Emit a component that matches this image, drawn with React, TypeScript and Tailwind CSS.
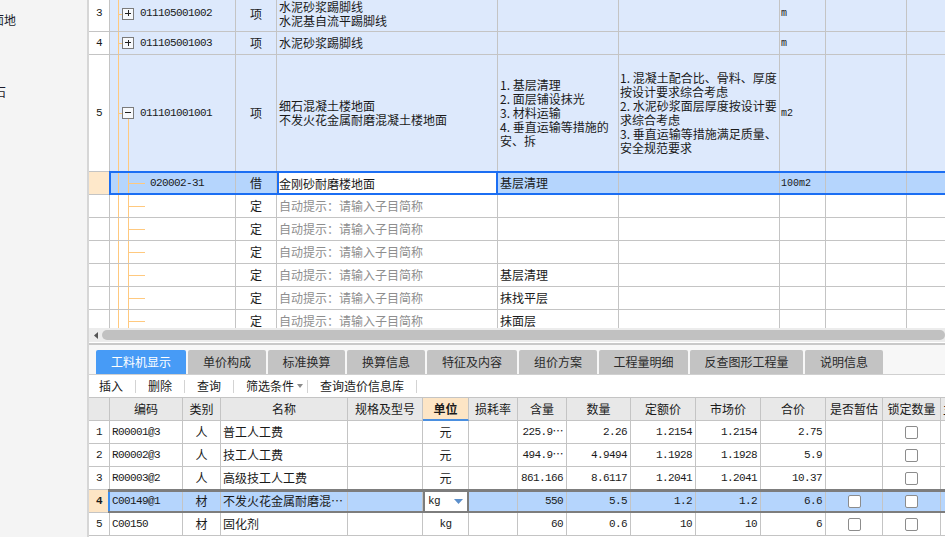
import React from "react";

const CJK = "font-['Noto_Sans_CJK_SC',sans-serif]";
const MONO = "font-['Liberation_Mono','Noto_Sans_CJK_SC',monospace] text-[11px] tracking-[-0.6px]";
const MONO10 = "font-['Liberation_Mono','Noto_Sans_CJK_SC',monospace] text-[10px]";

const TW = ["w-[21px]", "w-[126px]", "w-[41px]", "w-[221px]", "w-[121px]", "w-[161px]", "w-[46px]", "w-[81px]", "w-[200px]"];
const BW = ["w-[21px]", "w-[73px]", "w-[38px]", "w-[127px]", "w-[75px]", "w-[46px]", "w-[49px]", "w-[49px]", "w-[64px]", "w-[65px]", "w-[65px]", "w-[65px]", "w-[57px]", "w-[58px]", "w-[80px]"];

function Cell({ w, className = "", children }: { w: string; className?: string; children?: React.ReactNode }) {
  return (
    <div className={`${w} shrink-0 h-full border-r border-b border-[#c4c4c4] overflow-hidden flex items-center whitespace-nowrap ${className}`}>
      {children}
    </div>
  );
}

function Tree({ kind }: { kind: "plus" | "minus" | "child" }) {
  const line = "bg-[#ffc97f]";
  return (
    <>
      <div className={`absolute left-[8px] top-0 bottom-0 w-px ${line}`} />
      {kind === "child" && (
        <>
          <div className={`absolute left-[18px] top-0 bottom-0 w-px ${line}`} />
          <div className={`absolute left-[18px] top-1/2 w-[17px] h-px ${line}`} />
        </>
      )}
      {kind !== "child" && (
        <>
          <div className={`absolute left-[8px] top-1/2 w-[4px] h-px ${line}`} />
          {kind === "minus" && <div className={`absolute left-[18px] top-1/2 mt-[6px] bottom-0 w-px ${line}`} />}
          <div className="absolute left-[12px] top-1/2 -translate-y-1/2 w-[12px] h-[12px] border border-[#7b7b7b] bg-[#f7f9fc]">
            <div className="absolute left-[2px] top-[4px] w-[6px] h-px bg-[#222]" />
            {kind === "plus" && <div className="absolute left-[4.5px] top-[1.5px] w-px h-[6px] bg-[#222]" />}
          </div>
        </>
      )}
    </>
  );
}

function Check() {
  return <div className="w-[13px] h-[13px] rounded-[2px] border border-[#8c8c8c] bg-white" />;
}

function TopTable() {
  const blue = "bg-[#dde9fc]";
  const sel = "bg-[#b5d5fd]";
  const childRows: [string][] = [[""], [""], [""], ["基层清理"], ["抹找平层"], ["抹面层"]];
  return (
    <div className="h-[328px] shrink-0 overflow-hidden bg-white text-[12px]">
      <div className="-mt-[4px]">
        {/* row 3 */}
        <div className="flex h-[36px]">
          <Cell w={TW[0]} className={`justify-center ${MONO}`}>3</Cell>
          <Cell w={TW[1]} className={`relative ${blue}`}>
            <Tree kind="plus" />
            <span className={`ml-[30px] ${MONO}`}>011105001002</span>
          </Cell>
          <Cell w={TW[2]} className={`justify-center ${blue}`}>项</Cell>
          <Cell w={TW[3]} className={`pl-[2px] ${blue}`}>
            <div className="leading-[14px]">水泥砂浆踢脚线<br />水泥基自流平踢脚线</div>
          </Cell>
          <Cell w={TW[4]} className={blue} />
          <Cell w={TW[5]} className={blue} />
          <Cell w={TW[6]} className={`pl-[1px] ${blue} ${MONO10}`}>m</Cell>
          <Cell w={TW[7]} className={blue} />
          <Cell w={TW[8]} className={blue} />
        </div>
        {/* row 4 */}
        <div className="flex h-[23px]">
          <Cell w={TW[0]} className={`justify-center ${MONO}`}>4</Cell>
          <Cell w={TW[1]} className={`relative ${blue}`}>
            <Tree kind="plus" />
            <span className={`ml-[30px] ${MONO}`}>011105001003</span>
          </Cell>
          <Cell w={TW[2]} className={`justify-center ${blue}`}>项</Cell>
          <Cell w={TW[3]} className={`pl-[2px] ${blue}`}>水泥砂浆踢脚线</Cell>
          <Cell w={TW[4]} className={blue} />
          <Cell w={TW[5]} className={blue} />
          <Cell w={TW[6]} className={`pl-[1px] ${blue} ${MONO10}`}>m</Cell>
          <Cell w={TW[7]} className={blue} />
          <Cell w={TW[8]} className={blue} />
        </div>
        {/* row 5 */}
        <div className="flex h-[117px]">
          <Cell w={TW[0]} className={`justify-center ${MONO}`}>5</Cell>
          <Cell w={TW[1]} className={`relative ${blue}`}>
            <Tree kind="minus" />
            <span className={`ml-[30px] ${MONO}`}>011101001001</span>
          </Cell>
          <Cell w={TW[2]} className={`justify-center ${blue}`}>项</Cell>
          <Cell w={TW[3]} className={`pl-[2px] ${blue}`}>
            <div className="leading-[14px]">细石混凝土楼地面<br />不发火花金属耐磨混凝土楼地面</div>
          </Cell>
          <Cell w={TW[4]} className={`pl-[2px] ${blue}`}>
            <div className="leading-[14px]">1.&nbsp;基层清理<br />2.&nbsp;面层铺设抹光<br />3.&nbsp;材料运输<br />4.&nbsp;垂直运输等措施的<br />安、拆</div>
          </Cell>
          <Cell w={TW[5]} className={`pl-[1px] ${blue}`}>
            <div className="leading-[14px]">1.&nbsp;混凝土配合比、骨料、厚度<br />按设计要求综合考虑<br />2.&nbsp;水泥砂浆面层厚度按设计要<br />求综合考虑<br />3.&nbsp;垂直运输等措施满足质量、<br />安全规范要求</div>
          </Cell>
          <Cell w={TW[6]} className={`pl-[1px] ${blue} ${MONO10}`}>m2</Cell>
          <Cell w={TW[7]} className={blue} />
          <Cell w={TW[8]} className={blue} />
        </div>
        {/* selected child row */}
        <div className="flex h-[23px] relative">
          <Cell w={TW[0]} className="bg-[#fee8ca]" />
          <Cell w={TW[1]} className={`relative ${sel}`}>
            <Tree kind="child" />
            <span className={`ml-[40px] ${MONO}`}>020002-31</span>
          </Cell>
          <Cell w={TW[2]} className={`justify-center ${sel}`}>借</Cell>
          <div className="w-[221px] shrink-0 h-full border-x-2 border-[#1b6ef3] bg-white flex items-center whitespace-nowrap">金刚砂耐磨楼地面</div>
          <Cell w={TW[4]} className={`pl-[2px] ${sel}`}>基层清理</Cell>
          <Cell w={TW[5]} className={sel} />
          <Cell w={TW[6]} className={`pl-[1px] ${sel} ${MONO10}`}>100m2</Cell>
          <Cell w={TW[7]} className={sel} />
          <Cell w={TW[8]} className={sel} />
          <div className="absolute left-[20px] right-0 top-[-1px] h-[24px] border-2 border-r-0 border-[#1b6ef3] pointer-events-none" />
        </div>
        {childRows.map(([feat], i) => (
          <div key={i} className="flex h-[23px]">
            <Cell w={TW[0]} />
            <Cell w={TW[1]} className="relative">
              <Tree kind="child" />
            </Cell>
            <Cell w={TW[2]} className="justify-center">定</Cell>
            <Cell w={TW[3]} className="pl-[2px] text-[#8e8e8e]">自动提示：请输入子目简称</Cell>
            <Cell w={TW[4]} className="pl-[2px]">{feat}</Cell>
            <Cell w={TW[5]} />
            <Cell w={TW[6]} />
            <Cell w={TW[7]} />
            <Cell w={TW[8]} />
          </div>
        ))}
      </div>
    </div>
  );
}

function Scrollbar() {
  return (
    <div className="h-[14px] shrink-0 bg-[#ececec] flex items-center">
      <div className="w-[13px] h-full flex items-center justify-center">
        <svg width="4" height="7" viewBox="0 0 4 7">
          <path d="M4 0 L0 3.5 L4 7 Z" fill="#555" />
        </svg>
      </div>
      <div className="flex-1 h-[10px] rounded-full bg-[#c1c1c1]" />
    </div>
  );
}

function Tabs() {
  const tabs: [string, string][] = [
    ["工料机显示", "w-[90px]"],
    ["单价构成", "w-[78px]"],
    ["标准换算", "w-[77px]"],
    ["换算信息", "w-[78px]"],
    ["特征及内容", "w-[90px]"],
    ["组价方案", "w-[78px]"],
    ["工程量明细", "w-[89px]"],
    ["反查图形工程量", "w-[113px]"],
    ["说明信息", "w-[78px]"],
  ];
  return (
    <div className="h-[25px] shrink-0 bg-[#f7f7f7] border-b border-[#d0d0d0] flex items-end pl-[7px] gap-[2px]">
      {tabs.map(([t, w], i) => (
        <div
          key={t}
          className={`${w} h-[24px] shrink-0 rounded-t-[2px] flex items-center justify-center text-[12px] ${
            i === 0 ? "bg-[#479bf6] text-white" : "bg-[#c3c3c3] text-[#2a2a2a]"
          }`}
        >
          {t}
        </div>
      ))}
    </div>
  );
}

function Sep() {
  return <div className="w-px h-[13px] bg-[#d3d3d3]" />;
}

function Toolbar() {
  return (
    <div className="h-[22px] shrink-0 bg-white flex items-center pl-[10px] text-[12px] text-[#1a1a1a]">
      <span className="pr-[12px]">插入</span>
      <Sep />
      <span className="px-[12px]">删除</span>
      <Sep />
      <span className="px-[12px]">查询</span>
      <Sep />
      <span className="pl-[12px] pr-[4px] flex items-center">
        筛选条件
        <svg className="ml-[3px]" width="6" height="4" viewBox="0 0 6 4">
          <path d="M0 0 L6 0 L3 4 Z" fill="#8a8a8a" />
        </svg>
      </span>
      <Sep />
      <span className="px-[12px]">查询造价信息库</span>
      <Sep />
    </div>
  );
}

type BRow = {
  n: string;
  code: string;
  type: string;
  name: string;
  unit: string;
  vals: string[];
  est: boolean;
};

function BottomTable() {
  const heads = ["", "编码", "类别", "名称", "规格及型号", "单位", "损耗率", "含量", "数量", "定额价", "市场价", "合价", "是否暂估", "锁定数量"];
  const rows: BRow[] = [
    { n: "1", code: "R00001@3", type: "人", name: "普工人工费", unit: "元", vals: ["225.9⋯", "2.26", "1.2154", "1.2154", "2.75"], est: false },
    { n: "2", code: "R00002@3", type: "人", name: "技工人工费", unit: "元", vals: ["494.9⋯", "4.9494", "1.1928", "1.1928", "5.9"], est: false },
    { n: "3", code: "R00003@2", type: "人", name: "高级技工人工费", unit: "元", vals: ["861.166", "8.6117", "1.2041", "1.2041", "10.37"], est: false },
    { n: "4", code: "C00149@1", type: "材", name: "不发火花金属耐磨混⋯", unit: "kg", vals: ["550", "5.5", "1.2", "1.2", "6.6"], est: true },
    { n: "5", code: "C00150", type: "材", name: "固化剂", unit: "kg", vals: ["60", "0.6", "10", "10", "6"], est: true },
  ];
  return (
    <div className="flex-1 border-t border-[#c4c4c4] bg-white text-[12px] overflow-hidden">
      <div className="flex h-[23px] bg-[#e8e8e8]">
        {heads.map((h, i) =>
          i === 5 ? (
            <div key={i} className={`${BW[i]} shrink-0 h-full border-r border-[#c4c4c4] bg-[#fde5c5] border-b-2 border-b-[#4a8fe0] flex items-center justify-center font-bold`}>
              {h}
            </div>
          ) : (
            <Cell key={i} w={BW[i]} className="justify-center">
              {h}
            </Cell>
          )
        )}
        <Cell w={BW[14]} className="pl-[2px]">主</Cell>
      </div>
      {rows.map((r) => {
        const selected = r.n === "4";
        const bg = selected ? "bg-[#b5d5fd]" : "";
        return (
          <div key={r.n} className="flex h-[23px] relative">
            <Cell w={BW[0]} className={`justify-center ${MONO} ${selected ? "bg-[#fde5c5] font-bold" : ""}`}>{r.n}</Cell>
            <Cell w={BW[1]} className={`pl-[2px] ${MONO} ${bg}`}>{r.code}</Cell>
            <Cell w={BW[2]} className={`justify-center ${bg}`}>{r.type}</Cell>
            <Cell w={BW[3]} className={`pl-[2px] ${bg}`}>{r.name}</Cell>
            <Cell w={BW[4]} className={bg} />
            {selected ? (
              <div className="w-[46px] shrink-0 h-full border-x-2 border-[#7d7d7d] bg-white flex items-center pl-[3px] pr-[4px] justify-between">
                <span className={MONO}>kg</span>
                <svg width="9" height="5" viewBox="0 0 9 5">
                  <path d="M0 0 L9 0 L4.5 5 Z" fill="#5b8fcb" />
                </svg>
              </div>
            ) : (
              <Cell w={BW[5]} className={`justify-center ${r.unit === "kg" ? MONO : ""}`}>{r.unit}</Cell>
            )}
            <Cell w={BW[6]} className={bg} />
            {r.vals.map((v, j) => (
              <Cell key={j} w={BW[7 + j]} className={`justify-end pr-[3px] ${MONO} ${bg}`}>{v}</Cell>
            ))}
            <Cell w={BW[12]} className={`justify-center ${bg}`}>{r.est ? <Check /> : null}</Cell>
            <Cell w={BW[13]} className={`justify-center ${bg}`}><Check /></Cell>
            <Cell w={BW[14]} className={bg} />
            {selected && (
              <div className="absolute left-[19px] right-0 top-[-1px] h-[24px] border-t-[3px] border-b-[2px] border-[#7d7d7d] pointer-events-none">
                <div className="absolute left-0 top-0 bottom-0 w-[2px] bg-[#3d8ef0]" />
              </div>
            )}
          </div>
        );
      })}
    </div>
  );
}

export default function App() {
  return (
    <div className={`w-[945px] h-[537px] overflow-hidden flex bg-white text-[#1a1a1a] ${CJK}`}>
      <div className="w-[89px] shrink-0 bg-[#f4f4f4] border-r-2 border-[#d6d6d6] overflow-hidden text-[12px] text-[#1a1a2a]">
        <div className="mt-[13px] -ml-[8px] whitespace-nowrap leading-[14px]">面地</div>
        <div className="mt-[58px] -ml-[6px] leading-[14px]">石</div>
      </div>
      <div className="flex-1 min-w-0 flex flex-col overflow-hidden">
        <TopTable />
        <Scrollbar />
        <div className="h-px shrink-0 bg-white" />
        <div className="h-[2px] shrink-0 bg-[#c9c9c9]" />
        <div className="h-[5px] shrink-0 bg-[#f7f7f7]" />
        <Tabs />
        <Toolbar />
        <BottomTable />
      </div>
    </div>
  );
}
